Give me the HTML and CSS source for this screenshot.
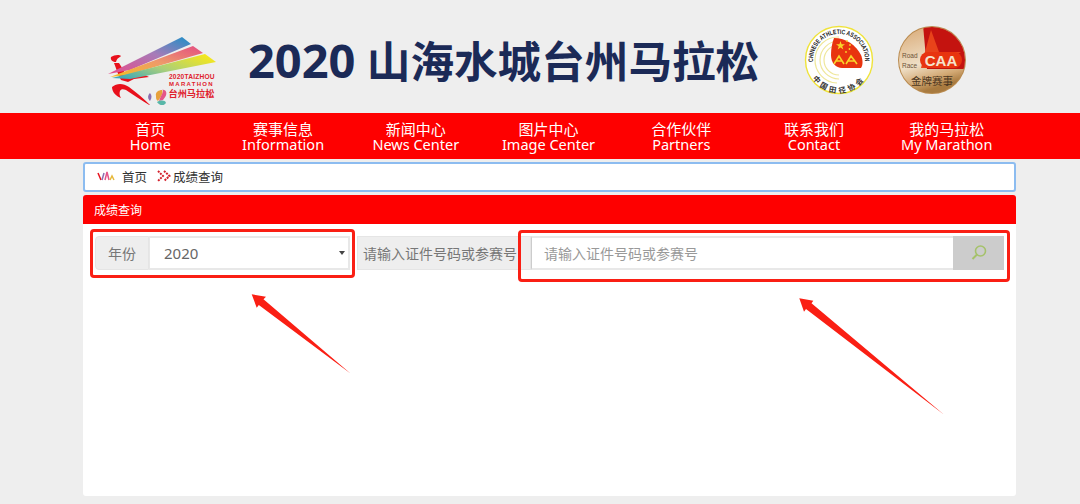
FILE: index.html
```html
<!DOCTYPE html>
<html lang="zh-CN">
<head>
  <meta charset="UTF-8" />
  <title>2020 山海水城台州马拉松</title>
  <link rel="stylesheet" href="styles.css">
</head>
<body>
  <header class="header">
    <svg class="logo" viewBox="0 0 140 85" width="140" height="85">
      <defs>
        <linearGradient id="rib1" x1="0" y1="1" x2="1" y2="0">
          <stop offset="0" stop-color="#e84a8a"/><stop offset="0.55" stop-color="#a77bb8"/><stop offset="1" stop-color="#1c8fc8"/>
        </linearGradient>
        <linearGradient id="rib2" x1="0" y1="1" x2="1" y2="0">
          <stop offset="0" stop-color="#f5c020"/><stop offset="0.5" stop-color="#ee9a6a"/><stop offset="1" stop-color="#e44d82"/>
        </linearGradient>
        <linearGradient id="rib3" x1="0" y1="0.8" x2="1" y2="0.2">
          <stop offset="0" stop-color="#3fa9b8"/><stop offset="0.45" stop-color="#a9cf7a"/><stop offset="1" stop-color="#f6e71c"/>
        </linearGradient>
      </defs>
      <path d="M21 37C24 35 29 34 31 36C29 38 27 38 26 42C23 42 20 40 21 37Z" fill="#e8101c"/>
      <path d="M24 43L29 43C33 49 35 54 38 57L44 56L45 50L59 57L44 59L38 62L31 60C28 55 26 48 24 43Z" fill="#e8101c"/>
      <path d="M22 67C27 63 33 63 39 67C46 72 54 79 61 86C52 81 44 75 36 70C33 69 31 69 30 71C29 74 30 76 31 78C26 76 22 72 22 67Z" fill="#e8101c"/>
      <path d="M18 54L92 17L101 24L40 50Z" fill="url(#rib1)"/>
      <path d="M20 57L103 26L113 33L37 55Z" fill="url(#rib2)"/>
      <path d="M22 58L115 34L126 42L40 59Z" fill="url(#rib3)"/>
      <path d="M60 73C57 76 58 79 60 81C62 78 62 75 60 73Z" fill="#8c6fb0"/>
      <path d="M66 76C65 72 69 70 72 70C74 73 70 78 68 81C66 80 66 78 66 76Z" fill="#e7a13c"/>
      <path d="M69 81C71 75 75 70 72 70C76 69 79 74 73 80Z" fill="#e4568a"/>
      <path d="M67 82C71 80 75 80 76 83C73 87 69 85 67 82Z" fill="#58b7a8"/>
      <text class="logo-en logo-top" x="79" y="59">2020TAIZHOU</text>
      <text class="logo-en logo-wide" x="79" y="65.5">MARATHON</text>
      <text class="logo-cn" x="78.5" y="76.5">台州马拉松</text>
    </svg>
    <h1 class="title"><span class="title-year">2020</span> 山海水城台州马拉松</h1>
    <div class="badges">
      <svg viewBox="0 0 70 70" width="70" height="70">
        <defs>
          <path id="arcTop" d="M9.5 40A26 26 0 1 1 60.5 40"/>
          <path id="arcBot" d="M4 37A31 31 0 0 0 66 37"/>
        </defs>
        <circle cx="35" cy="35" r="33.5" fill="#fff" stroke="#efe33a" stroke-width="1.4"/>
        <path d="M35 20A15 15 0 0 0 35 50M35 16A19 19 0 0 0 35 54M35 12A23 23 0 0 0 33 58" fill="none" stroke="#efe79a" stroke-width="1.2"/>
        <path d="M30 13C42 13 52 20 57 30C59 35 59 40 57 43L38 43C32 43 27 38 27 30C27 24 28 18 30 13Z" fill="#e8340f"/>
        <path d="M36.5 16l1.1 3.2 3.4 0-2.7 2 1 3.3-2.800-2-2.800 2 1-3.300-2.700-2 3.400 0Z" fill="#f8d52a"/>
        <circle cx="43" cy="16" r="0.9" fill="#f8d52a"/><circle cx="46" cy="20" r="0.9" fill="#f8d52a"/><circle cx="45.5" cy="24" r="0.9" fill="#f8d52a"/><circle cx="42" cy="27" r="0.9" fill="#f8d52a"/>
        <path d="M30 39L35 31L40 39M42 39L47 31L53 39M32 36H38M44 36H51" fill="none" stroke="#f8d52a" stroke-width="1.6"/>
        <text class="badge-arc"><textPath href="#arcTop" startOffset="3" textLength="85" lengthAdjust="spacingAndGlyphs">CHINESE ATHLETIC ASSOCIATION</textPath></text>
        <text class="badge-cn"><textPath href="#arcBot" startOffset="50%" text-anchor="middle">中国田径协会</textPath></text>
      </svg>
      <svg viewBox="0 0 70 70" width="70" height="70">
        <defs>
          <linearGradient id="gold" x1="0" y1="0" x2="0.3" y2="1">
            <stop offset="0" stop-color="#d8a874"/><stop offset="0.6" stop-color="#efdfc6"/><stop offset="0.85" stop-color="#d2a873"/><stop offset="1" stop-color="#a87a3f"/>
          </linearGradient>
          <clipPath id="disc"><circle cx="35" cy="35" r="33"/></clipPath>
        </defs>
        <circle cx="35" cy="35" r="34" fill="#b98a4e"/>
        <circle cx="35" cy="35" r="33" fill="url(#gold)"/>
        <path d="M26 0H70V44H30Z" fill="#c4130f" clip-path="url(#disc)"/>
        <path d="M34 5L42 27H64L50 36L53 43H24L28 27Z" fill="#e8431a"/>
        <rect x="23" y="27" width="42" height="16" rx="8" fill="#e8340f"/>
        <text class="caa" x="44" y="40.5" text-anchor="middle">CAA</text>
        <text class="road" x="5" y="33">Road</text>
        <text class="road" x="5" y="43">Race</text>
        <text class="gold-cn" x="35" y="59.5" text-anchor="middle">金牌赛事</text>
      </svg>
    </div>
  </header>

  <nav class="nav">
    <a class="nav-item"><span>首页</span><span class="nav-en">Home</span></a>
    <a class="nav-item"><span>赛事信息</span><span class="nav-en">Information</span></a>
    <a class="nav-item"><span>新闻中心</span><span class="nav-en">News Center</span></a>
    <a class="nav-item"><span>图片中心</span><span class="nav-en">Image Center</span></a>
    <a class="nav-item"><span>合作伙伴</span><span class="nav-en">Partners</span></a>
    <a class="nav-item"><span>联系我们</span><span class="nav-en">Contact</span></a>
    <a class="nav-item"><span>我的马拉松</span><span class="nav-en">My Marathon</span></a>
  </nav>

  <main class="main">
    <div class="crumbs">
      <svg class="crumb-logo" viewBox="0 0 18 12" width="18" height="12">
        <path d="M1 3L4 10" stroke="#e8101c" stroke-width="1.5" fill="none"/>
        <path d="M5 10L7 3" stroke="#8c6fb0" stroke-width="1.5" fill="none"/>
        <path d="M8 10L10 2L12 10" stroke="#e4568a" stroke-width="1.5" fill="none"/>
        <path d="M13 10L15 6L17 10" stroke="#e7b93c" stroke-width="1.5" fill="none"/>
      </svg>
      <span class="crumb-home">首页</span>
      <svg class="crumb-sep" viewBox="0 0 14 12" width="14" height="12">
        <path d="M1 1L6 6L1 11M7 1L12.5 6L7 11" fill="none" stroke="#d4202c" stroke-width="2" stroke-dasharray="2 1"/>
      </svg>
      <span>成绩查询</span>
    </div>

    <section class="panel">
      <div class="panel-head">成绩查询</div>
      <div class="panel-body">
        <form class="search-row">
          <div class="group year-group">
            <span class="addon year-label">年份</span>
            <div class="select">2020<i class="caret"></i></div>
          </div>
          <div class="group id-group">
            <span class="addon id-label">请输入证件号码或参赛号</span>
            <input class="id-input" type="text" placeholder="请输入证件号码或参赛号">
            <button class="search-btn" type="button">
              <svg viewBox="0 0 16 16" width="16" height="16">
                <circle cx="9.5" cy="6" r="5" fill="none" stroke="#a5c26a" stroke-width="1.6"/>
                <path d="M6 9.5L1.5 14" stroke="#a5c26a" stroke-width="2"/>
              </svg>
            </button>
          </div>
        </form>

        <div class="mark mark-year"></div>
        <div class="mark mark-id"></div>
        <svg class="arrows" viewBox="83 224 933 272" width="933" height="272">
          <path d="M251.7 294.3L266 296.7L263.5 299.3L350.5 373.5L258.8 305L256.7 307.7Z" fill="#fa1f14"/>
          <path d="M799.3 298.3L813.3 300.7L811.5 303.2L943.8 414.5L806 309L804 311.7Z" fill="#fa1f14"/>
        </svg>
      </div>
    </section>
  </main>
</body>
</html>
```

FILE: styles.css
```css
* {
  box-sizing: border-box;
}
html, body {
  height: 504px;
  overflow: hidden;
}
body {
  margin: 0;
  background: #eee;
  color: #333;
  font-family: "Noto Sans", "Noto Sans CJK SC", sans-serif;
}

.header {
  display: flex;
  align-items: center;
  height: 113px;
  padding: 12px 0 0 90px;
}
.logo {
  flex: none;
}
.logo-en {
  font-family: "Liberation Sans", sans-serif;
  font-size: 6px;
  font-weight: bold;
  fill: #e0202c;
}
.logo-top {
  font-size: 6.6px;
  letter-spacing: 0.2px;
}
.logo-wide {
  letter-spacing: 1.3px;
}
.logo-cn {
  font-family: "Noto Sans CJK SC", sans-serif;
  font-size: 9.2px;
  font-weight: bold;
  fill: #e0202c;
}
.title {
  margin: -5px 0 0 18px;
  font-size: 43.6px;
  line-height: 60px;
  font-weight: 700;
  color: #1b2a57;
  white-space: nowrap;
  font-family: "Open Sans", "Noto Sans CJK SC", sans-serif;
}
.title-year {
  font-size: 47px;
}
.badges {
  display: flex;
  gap: 23px;
  margin: -5px 0 0 45px;
}
.badge-arc {
  font-family: "Liberation Sans", sans-serif;
  font-size: 6.5px;
  font-weight: bold;
  fill: #222;
}
.badge-cn {
  font-family: "Noto Sans CJK SC", sans-serif;
  font-size: 7.5px;
  font-weight: bold;
  letter-spacing: 3px;
  fill: #333;
}
.caa {
  font-family: "Liberation Sans", sans-serif;
  font-size: 15px;
  font-weight: bold;
  fill: #f6e3cc;
}
.road {
  font-family: "Liberation Sans", sans-serif;
  font-size: 6.5px;
  fill: #6d5238;
}
.gold-cn {
  font-family: "Noto Sans CJK SC", sans-serif;
  font-size: 10.5px;
  fill: #4a3520;
}

.nav {
  display: flex;
  height: 46px;
  padding: 0 67px 0 84px;
  background: #fe0000;
}
.nav-item {
  flex: 1;
  display: flex;
  flex-direction: column;
  align-items: center;
  justify-content: center;
  color: #fff;
  font-size: 15px;
  line-height: 16px;
  white-space: nowrap;
}
.nav-en {
  margin-top: -1px;
  font-size: 14.5px;
}

.main {
  width: 933px;
  margin: 3px 0 0 83px;
}
.crumbs {
  display: flex;
  align-items: center;
  height: 30px;
  padding: 0 0 2px 12px;
  background: #fff;
  border: 2px solid #8cbcf0;
  border-radius: 3px;
  font-size: 12.5px;
}
.crumb-home {
  margin: 0 10px 0 7px;
}
.crumb-sep {
  margin-right: 2px;
}

.panel {
  margin-top: 3px;
}
.panel-head {
  height: 29px;
  padding: 0 11px;
  background: #fe0000;
  border-radius: 3px 3px 0 0;
  color: #fff;
  font-size: 12px;
  line-height: 31px;
}
.panel-body {
  position: relative;
  height: 272px;
  padding: 12px 12px 0;
  background: #fff;
  border-radius: 0 0 3px 3px;
}
.search-row {
  display: flex;
  gap: 7px;
}
.group {
  display: flex;
  height: 34px;
}
.year-group {
  flex: none;
  width: 255px;
}
.id-group {
  flex: 1;
}
.addon {
  display: flex;
  align-items: center;
  background: #eee;
  border: 1px solid #e5e5e5;
  color: #777;
  font-size: 14px;
  white-space: nowrap;
}
.year-label {
  flex: none;
  width: 54px;
  justify-content: center;
  border-radius: 4px 0 0 4px;
}
.id-label {
  flex: none;
  width: 174px;
  padding-left: 5px;
}
.select {
  position: relative;
  flex: 1;
  padding-left: 14px;
  border: 2px solid #e8e8e8;
  border-left-width: 1px;
  color: #666;
  font-size: 15px;
  line-height: 31px;
}
.caret {
  position: absolute;
  right: 3px;
  top: 13px;
  border: 3px solid transparent;
  border-top: 4px solid #444;
  border-bottom: 0;
}
.id-input {
  flex: 1;
  min-width: 0;
  padding: 0 12px;
  border: 2px solid #e8e8e8;
  border-left: 1px solid #ccc;
  border-right: 0;
  outline: none;
  font: inherit;
  font-size: 14px;
  color: #666;
}
.id-input::placeholder {
  color: #999;
}
.search-btn {
  flex: none;
  display: flex;
  align-items: center;
  justify-content: center;
  width: 51px;
  padding: 0;
  border: 0;
  background: #ccc;
}

.mark {
  position: absolute;
  border: 3px solid #fa1f14;
  border-radius: 4px;
}
.mark-year {
  left: 7px;
  top: 5px;
  width: 265px;
  height: 49px;
}
.mark-id {
  left: 435px;
  top: 6px;
  width: 492px;
  height: 52px;
}
.arrows {
  position: absolute;
  left: 0;
  top: 0;
  pointer-events: none;
}
```
